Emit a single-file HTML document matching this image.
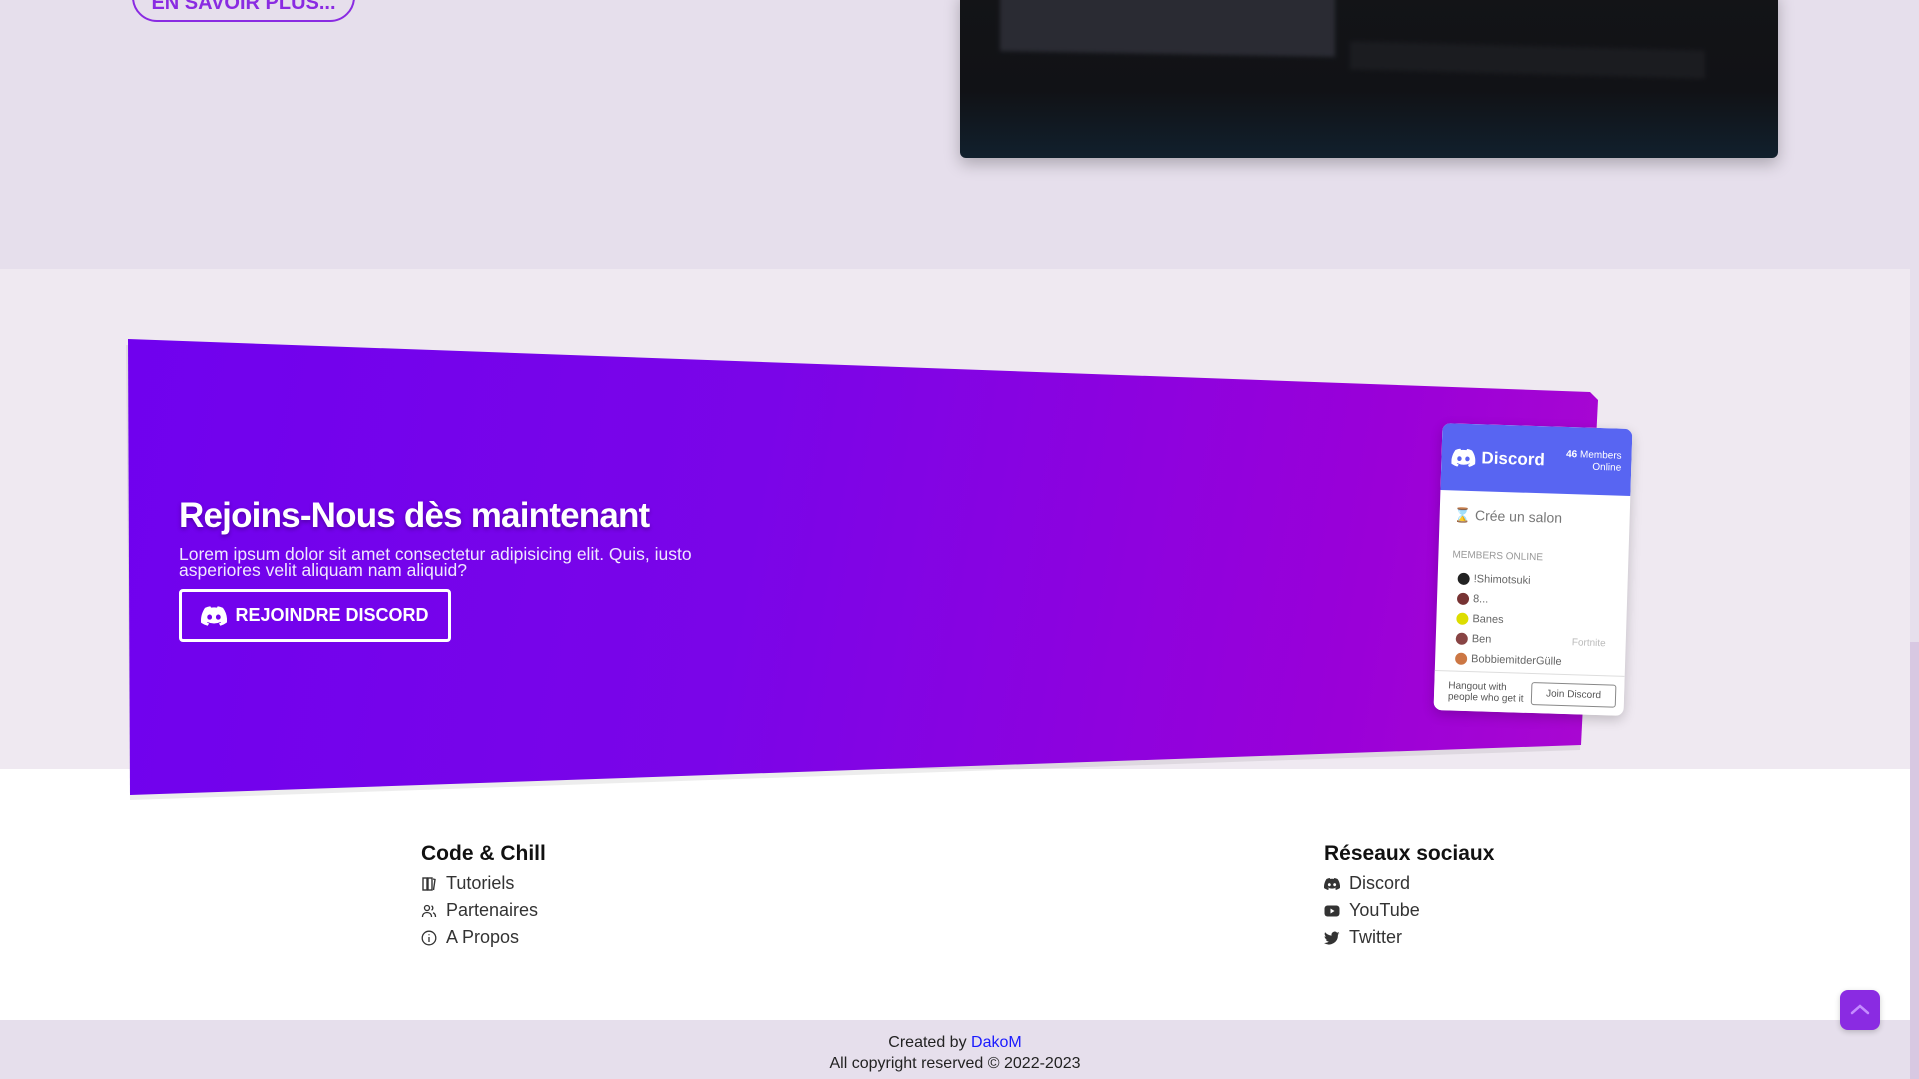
<!DOCTYPE html>
<html><head><meta charset="utf-8"><style>
*{margin:0;padding:0;box-sizing:border-box}
html,body{width:1919px;height:1079px;overflow:hidden;font-family:"Liberation Sans",sans-serif}
body{position:relative;background:#efe9f1}
.abs{position:absolute}
#top{left:0;top:0;width:1910px;height:269px;background:#e6dfec}
#btn1{left:132px;top:-28px;width:223px;height:50px;border:2.5px solid #8a2be2;border-radius:25px;color:#8a2be2;font-weight:bold;font-size:20px;text-align:center;line-height:58px}
#img{left:960px;top:-10px;width:818px;height:168px;border-radius:6px;background:linear-gradient(180deg,#131417 0%,#111216 60%,#11202d 100%);box-shadow:0 6px 16px rgba(0,0,0,.25);overflow:hidden}
#img .p1{position:absolute;left:40px;top:0;width:335px;height:64px;background:#2a2b33;filter:blur(2px);transform:skewY(1deg)}
#img .p2{position:absolute;left:390px;top:56px;width:355px;height:28px;background:#1b1c20;filter:blur(2px);transform:skewY(1.5deg)}
#mid{left:0;top:269px;width:1910px;height:500px;background:#efe9f1}
#banner{left:0;top:0;width:1910px;height:1079px;background:linear-gradient(100deg,#6d00f0 0%,#7a05e8 40%,#9a00d8 70%,#c012c8 100%);clip-path:polygon(128px 339px,1590px 392px,1598px 400px,1581px 745px,130px 795px)}
#shadow{left:0;top:0;width:1910px;height:1079px;background:rgba(0,0,0,.07);filter:blur(5px);clip-path:polygon(126px 345px,1590px 400px,1580px 750px,130px 800px)}
#foot{left:0;top:769px;width:1910px;height:251px;background:#fff}
#bar{left:0;top:1020px;width:1910px;height:59px;background:#e6dfec;text-align:center;font-size:16px;color:#222}
#scroll{left:1910px;top:0;width:9px;height:1079px;background:#e6dfec}
#thumb{left:1910px;top:642px;width:9px;height:437px;background:#d8c8e2}
h2{font-size:35px;color:#fff;font-weight:bold;text-shadow:0 2px 4px rgba(0,0,0,.3);letter-spacing:-.8px}
.lorem{color:#f0e8ff;font-size:17.5px;line-height:16px}
#jbtn{left:179px;top:589px;width:272px;height:53px;border:3px solid #fff;border-radius:4px;color:#fff;font-weight:bold;font-size:18px;display:flex;align-items:center;justify-content:center;gap:8px}
.col h3{font-size:21px;font-weight:bold;color:#111;margin-bottom:4px}
.col div{font-size:18px;color:#333;height:27px;display:flex;align-items:center;gap:9px}
.col svg{width:16px;height:16px}
#widget{left:1438px;top:426px;width:190px;height:287px;background:#fff;border-radius:8px;transform:rotate(1.8deg);box-shadow:0 4px 12px rgba(0,0,0,.2);overflow:hidden;font-size:11px;color:#666}
#widget .hd{height:67px;background:#5865f2;color:#fff;display:flex;align-items:center;padding:0 10px;gap:6px}
.m{display:flex;align-items:center;gap:4px;height:20px;padding-left:20px}
.m i{width:12px;height:12px;border-radius:50%;display:inline-block}
#up{left:1840px;top:990px;width:40px;height:40px;background:#8a2be2;border-radius:8px;box-shadow:0 2px 6px rgba(0,0,0,.2)}
</style></head><body>
<div id="top" class="abs"></div>
<div id="btn1" class="abs">EN SAVOIR PLUS...</div>
<div id="img" class="abs"><div class="p1"></div><div class="p2"></div></div>
<div id="mid" class="abs"></div>
<div id="foot" class="abs"></div>
<div id="shadow" class="abs"></div>
<div id="banner" class="abs"></div>
<h2 class="abs" style="left:179px;top:496px">Rejoins-Nous dès maintenant</h2>
<div class="abs lorem" style="left:179px;top:546px">Lorem ipsum dolor sit amet consectetur adipisicing elit. Quis, iusto<br>asperiores velit aliquam nam aliquid?</div>
<div id="jbtn" class="abs"><svg width="26" height="20" viewBox="0 0 24 18"><path fill="#fff" d="M20.3 1.5A19.8 19.8 0 0 0 15.4 0l-.6 1.3a18.4 18.4 0 0 0-5.5 0L8.6 0A19.7 19.7 0 0 0 3.7 1.5C.6 6.2-.3 10.7.1 15.2A20 20 0 0 0 6.2 18l1.3-2.1a12.9 12.9 0 0 1-2-1l.5-.4a14.1 14.1 0 0 0 12.1 0l.5.4a12.9 12.9 0 0 1-2 1l1.3 2.1a19.9 19.9 0 0 0 6-3C24.5 10 23.2 5.5 20.3 1.5ZM8 12.4c-1.2 0-2.2-1.1-2.2-2.4S6.8 7.6 8 7.6s2.2 1.1 2.2 2.4-1 2.4-2.2 2.4Zm8 0c-1.2 0-2.2-1.1-2.2-2.4s1-2.4 2.2-2.4 2.2 1.1 2.2 2.4-1 2.4-2.2 2.4Z"/></svg>REJOINDRE DISCORD</div>
<div id="widget" class="abs">
<div class="hd"><svg width="24" height="18" viewBox="0 0 24 18"><path fill="#fff" d="M20.3 1.5A19.8 19.8 0 0 0 15.4 0l-.6 1.3a18.4 18.4 0 0 0-5.5 0L8.6 0A19.7 19.7 0 0 0 3.7 1.5C.6 6.2-.3 10.7.1 15.2A20 20 0 0 0 6.2 18l1.3-2.1a12.9 12.9 0 0 1-2-1l.5-.4a14.1 14.1 0 0 0 12.1 0l.5.4a12.9 12.9 0 0 1-2 1l1.3 2.1a19.9 19.9 0 0 0 6-3C24.5 10 23.2 5.5 20.3 1.5ZM8 12.4c-1.2 0-2.2-1.1-2.2-2.4S6.8 7.6 8 7.6s2.2 1.1 2.2 2.4-1 2.4-2.2 2.4Zm8 0c-1.2 0-2.2-1.1-2.2-2.4s1-2.4 2.2-2.4 2.2 1.1 2.2 2.4-1 2.4-2.2 2.4Z"/></svg><b style="font-size:17px">Discord</b><span style="margin-left:auto;font-size:10px;text-align:right;line-height:12px"><b>46</b> Members<br>Online</span></div>
<div style="padding:16px 14px 0;font-size:14px;color:#777">⌛ Crée un salon</div>
<div style="padding:26px 14px 8px;font-size:10px;color:#999">MEMBERS ONLINE</div>
<div class="m"><i style="background:#222"></i>!Shimotsuki</div>
<div class="m"><i style="background:#733"></i>8...</div>
<div class="m"><i style="background:#dd0"></i>Banes</div>
<div class="m"><i style="background:#844"></i>Ben<span style="margin-left:auto;margin-right:20px;color:#bbb;font-size:10px">Fortnite</span></div>
<div class="m"><i style="background:#c74"></i>BobbiemitderGülle</div>
<div style="position:absolute;bottom:0;left:0;right:0;height:40px;border-top:1px solid #ddd;background:#fff;display:flex;align-items:center;padding:0 8px 0 14px;font-size:10px;line-height:11px;color:#555">Hangout with<br>people who get it<span style="margin-left:auto;border:1px solid #888;border-radius:3px;padding:5px 14px">Join Discord</span></div>
</div>
<div class="abs col" style="left:421px;top:842px"><h3>Code &amp; Chill</h3>
<div><svg viewBox="0 0 16 16" fill="none" stroke="#333" stroke-width="1.4"><rect x="2" y="2" width="4" height="12"/><rect x="7" y="2" width="4" height="12"/><path d="M12 3l2 .5-1.5 10.5"/></svg>Tutoriels</div>
<div><svg viewBox="0 0 16 16" fill="none" stroke="#333" stroke-width="1.3"><circle cx="6" cy="5" r="2.5"/><path d="M1.5 14c0-3 2-4.5 4.5-4.5s4.5 1.5 4.5 4.5"/><path d="M10.5 2.8a2.5 2.5 0 0 1 0 4.4M12 9.7c1.5.5 2.5 2 2.5 4.3"/></svg>Partenaires</div>
<div><svg viewBox="0 0 16 16" fill="none" stroke="#333" stroke-width="1.3"><circle cx="8" cy="8" r="6.8"/><path d="M8 7v5M8 4.3v1"/></svg>A Propos</div></div>
<div class="abs col" style="left:1324px;top:842px"><h3>Réseaux sociaux</h3>
<div><svg viewBox="0 0 24 18"><path fill="#333" d="M20.3 1.5A19.8 19.8 0 0 0 15.4 0l-.6 1.3a18.4 18.4 0 0 0-5.5 0L8.6 0A19.7 19.7 0 0 0 3.7 1.5C.6 6.2-.3 10.7.1 15.2A20 20 0 0 0 6.2 18l1.3-2.1a12.9 12.9 0 0 1-2-1l.5-.4a14.1 14.1 0 0 0 12.1 0l.5.4a12.9 12.9 0 0 1-2 1l1.3 2.1a19.9 19.9 0 0 0 6-3C24.5 10 23.2 5.5 20.3 1.5ZM8 12.4c-1.2 0-2.2-1.1-2.2-2.4S6.8 7.6 8 7.6s2.2 1.1 2.2 2.4-1 2.4-2.2 2.4Zm8 0c-1.2 0-2.2-1.1-2.2-2.4s1-2.4 2.2-2.4 2.2 1.1 2.2 2.4-1 2.4-2.2 2.4Z"/></svg>Discord</div>
<div><svg viewBox="0 0 16 16"><rect x="0.5" y="2.5" width="15" height="11" rx="3" fill="#333"/><path d="M6.5 5.5v5l4-2.5z" fill="#fff"/></svg>YouTube</div>
<div><svg viewBox="0 0 16 16"><path fill="#333" d="M15.5 3.2a6 6 0 0 1-1.8.5 3.2 3.2 0 0 0 1.4-1.8 6.3 6.3 0 0 1-2 .8 3.2 3.2 0 0 0-5.5 2.9A9 9 0 0 1 1.1 2.3a3.2 3.2 0 0 0 1 4.3 3.2 3.2 0 0 1-1.5-.4 3.2 3.2 0 0 0 2.6 3.2 3.2 3.2 0 0 1-1.4 0 3.2 3.2 0 0 0 3 2.2A6.4 6.4 0 0 1 0 13a9 9 0 0 0 13.9-8v-.4a6.5 6.5 0 0 0 1.6-1.4Z"/></svg>Twitter</div></div>
<div id="bar" class="abs"><div style="margin-top:12px;line-height:21px">Created by <span style="color:#1a1aff">DakoM</span><br>All copyright reserved © 2022-2023</div></div>
<div id="scroll" class="abs"></div><div id="thumb" class="abs"></div>
<div id="up" class="abs"><svg width="40" height="40" viewBox="0 0 40 40"><path d="M12 23l8-7 8 7" fill="none" stroke="#c58cff" stroke-width="2.5" stroke-linecap="round"/></svg></div>
</body></html>
